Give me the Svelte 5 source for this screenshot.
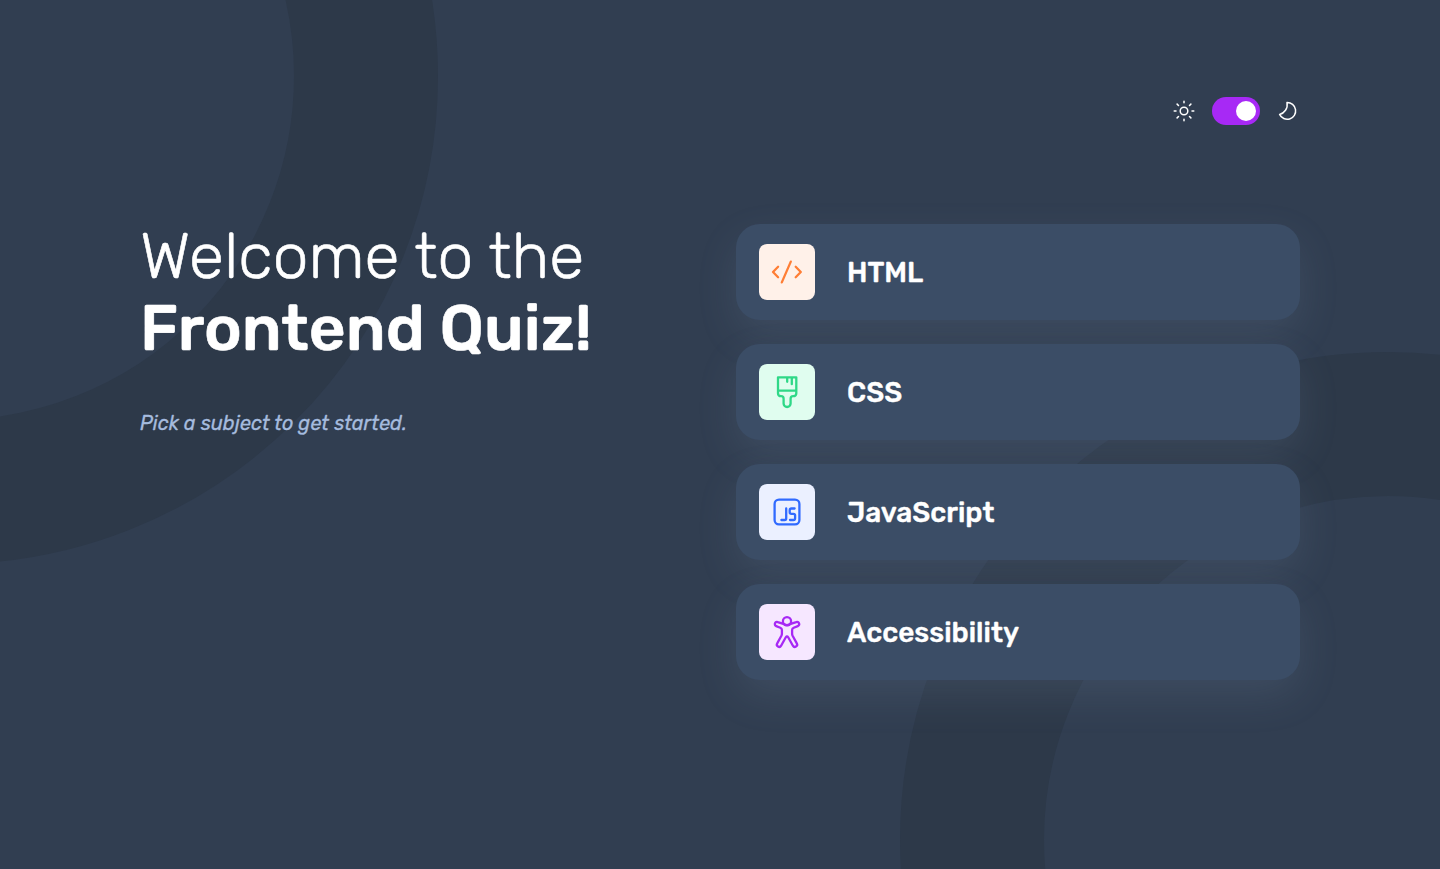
<script>
  let dark = $state(true);
  const subjects = [
    { id: 'html', name: 'HTML' },
    { id: 'css', name: 'CSS' },
    { id: 'js', name: 'JavaScript' },
    { id: 'a11y', name: 'Accessibility' }
  ];
</script>

<div class="page">
  <svg class="pattern" viewBox="0 0 1440 869" fill="none" stroke="#2D3949" stroke-width="144" aria-hidden="true">
    <circle cx="-50" cy="76" r="416" />
    <circle cx="1388" cy="840" r="416" />
  </svg>
  <div class="container">
    <header>
      <svg width="24" height="24" viewBox="0 0 24 24" fill="none" stroke="#fff" stroke-width="1.5" stroke-linecap="round">
        <circle cx="12" cy="12" r="3.8" />
        <path d="M12 2.2v1.5M12 20.3v1.5M2.2 12h1.8M20 12h1.8M5.1 5.1l1.4 1.4M17.5 17.5l1.4 1.4M5.1 18.9l1.4-1.4M17.5 6.5l1.4-1.4" />
      </svg>
      <button class="toggle" class:on={dark} onclick={() => (dark = !dark)} aria-pressed={dark}><span></span></button>
      <svg width="24" height="24" viewBox="0 0 24 24" fill="none" stroke="#fff" stroke-width="1.5" stroke-linejoin="round">
        <path d="M11 3.5A8.4 8.4 0 1 1 3.6 15.4C8.3 14.4 12.2 9.4 11 3.5Z" />
      </svg>
    </header>
    <main>
      <section>
        <h1><span class="light">Welcome to the</span><span class="bold">Frontend Quiz!</span></h1>
        <p>Pick a subject to get started.</p>
      </section>
      <ul>
        {#each subjects as s}
          <li>
            <span class="icon {s.id}">
              <svg width="56" height="56" viewBox="0 0 56 56" fill="none" stroke="currentColor" stroke-width="2.3" stroke-linecap="round" stroke-linejoin="round">
                {#if s.id === 'html'}
                  <path d="M19.1 22.8L14 28l5.1 5.2M36.7 22.8L41.8 28l-5.1 5.2M31.8 17.6l-9 20.8" />
                {:else if s.id === 'css'}
                  <path d="M19 13.3h18.3v15.9c0 2-1.2 3-3.2 3-1.7 0-2.5.8-2.5 2.5v4.8a3.5 3.5 0 0 1-7 0v-4.8c0-1.7-.8-2.5-2.5-2.5-2 0-3.1-1-3.1-3zM19 26.7h18.3M28.2 13.3v4.5M32.8 13.3v6.9" />
                {:else if s.id === 'js'}
                  <rect x="15.6" y="15.6" width="24.8" height="24.8" rx="4.4" />
                  <path d="M27.2 24.5v9.9q0 1.6-1.6 1.6h-3.2M35.6 24.5h-3.2q-1.7 0-1.7 1.7v2.1q0 1.6 1.7 1.6h2q1.7 0 1.7 1.7v2.7q0 1.7-1.7 1.7h-3.4" />
                {:else}
                  <circle cx="28" cy="17.2" r="4.1" />
                  <path d="M24.3 19.8l-5.5-1.7a2.15 2.15 0 0 0-1.6 4l4.1 1.6q1.6.7 1.6 2.4v3.7q0 .9-.5 1.9l-4.2 7.7a2.2 2.2 0 0 0 3.9 2.3l4.7-8.4q1.2-1.8 2.4 0l4.7 8.4a2.2 2.2 0 0 0 3.9-2.3l-4.2-7.7q-.5-1-.5-1.9v-3.7q0-1.7 1.6-2.4l4.1-1.6a2.15 2.15 0 0 0-1.6-4l-5.5 1.7q-3.7 2.6-7.4 0z" />
                {/if}
              </svg>
            </span>
            <span class="name">{s.name}</span>
          </li>
        {/each}
      </ul>
    </main>
  </div>
</div>

<style>
  :global(body) { margin: 0; background: #313e51; }
  .page { position: relative; height: 869px; overflow: hidden; background: #313e51; color: #fff; font-family: Rubik, Roboto, sans-serif; }
  .pattern { position: absolute; top: 0; left: 0; width: 1440px; height: 869px; }
  .container { position: relative; width: 1160px; margin: 0 auto; padding-top: 97px; }
  header { display: flex; justify-content: flex-end; align-items: center; gap: 16px; height: 28px; }
  .toggle { box-sizing: border-box; width: 48px; height: 28px; padding: 4px; border: 0; border-radius: 14px; background: #a729f5; display: flex; }
  .toggle.on { justify-content: flex-end; }
  .toggle span { width: 20px; height: 20px; border-radius: 50%; background: #fff; }
  main { display: grid; grid-template-columns: 564px 564px; gap: 32px; margin-top: 99px; }
  h1 { margin: -4px 0 0; font-size: 64px; line-height: 72px; font-weight: 300; -webkit-text-stroke: .6px #fff; }
  h1 span { display: block; white-space: nowrap; }
  .bold { font-weight: 500; }
  p { margin: 44px 0 0; font-size: 20px; line-height: 30px; font-style: italic; color: #a5bbde; -webkit-text-stroke: .3px #a5bbde; }
  ul { list-style: none; margin: 0; padding: 0; display: flex; flex-direction: column; gap: 24px; }
  li { box-sizing: border-box; height: 96px; padding: 0 23px; border-radius: 24px; background: #3b4d66; display: flex; align-items: center; gap: 32px; box-shadow: 0 16px 40px rgba(143, 160, 193, .14); }
  .icon { width: 56px; height: 56px; border-radius: 8px; overflow: hidden; }
  .icon svg { display: block; }
  .icon.html { background: #fff1e9; color: #ff7e35; }
  .icon.css { background: #e0fdef; color: #2fd887; }
  .icon.js { background: #ebf0ff; color: #306aff; }
  .icon.a11y { background: #f6e7ff; color: #a729f5; }
  .name { font-size: 28px; line-height: 28px; font-weight: 500; padding-top: 2px; -webkit-text-stroke: .4px #fff; }
</style>
